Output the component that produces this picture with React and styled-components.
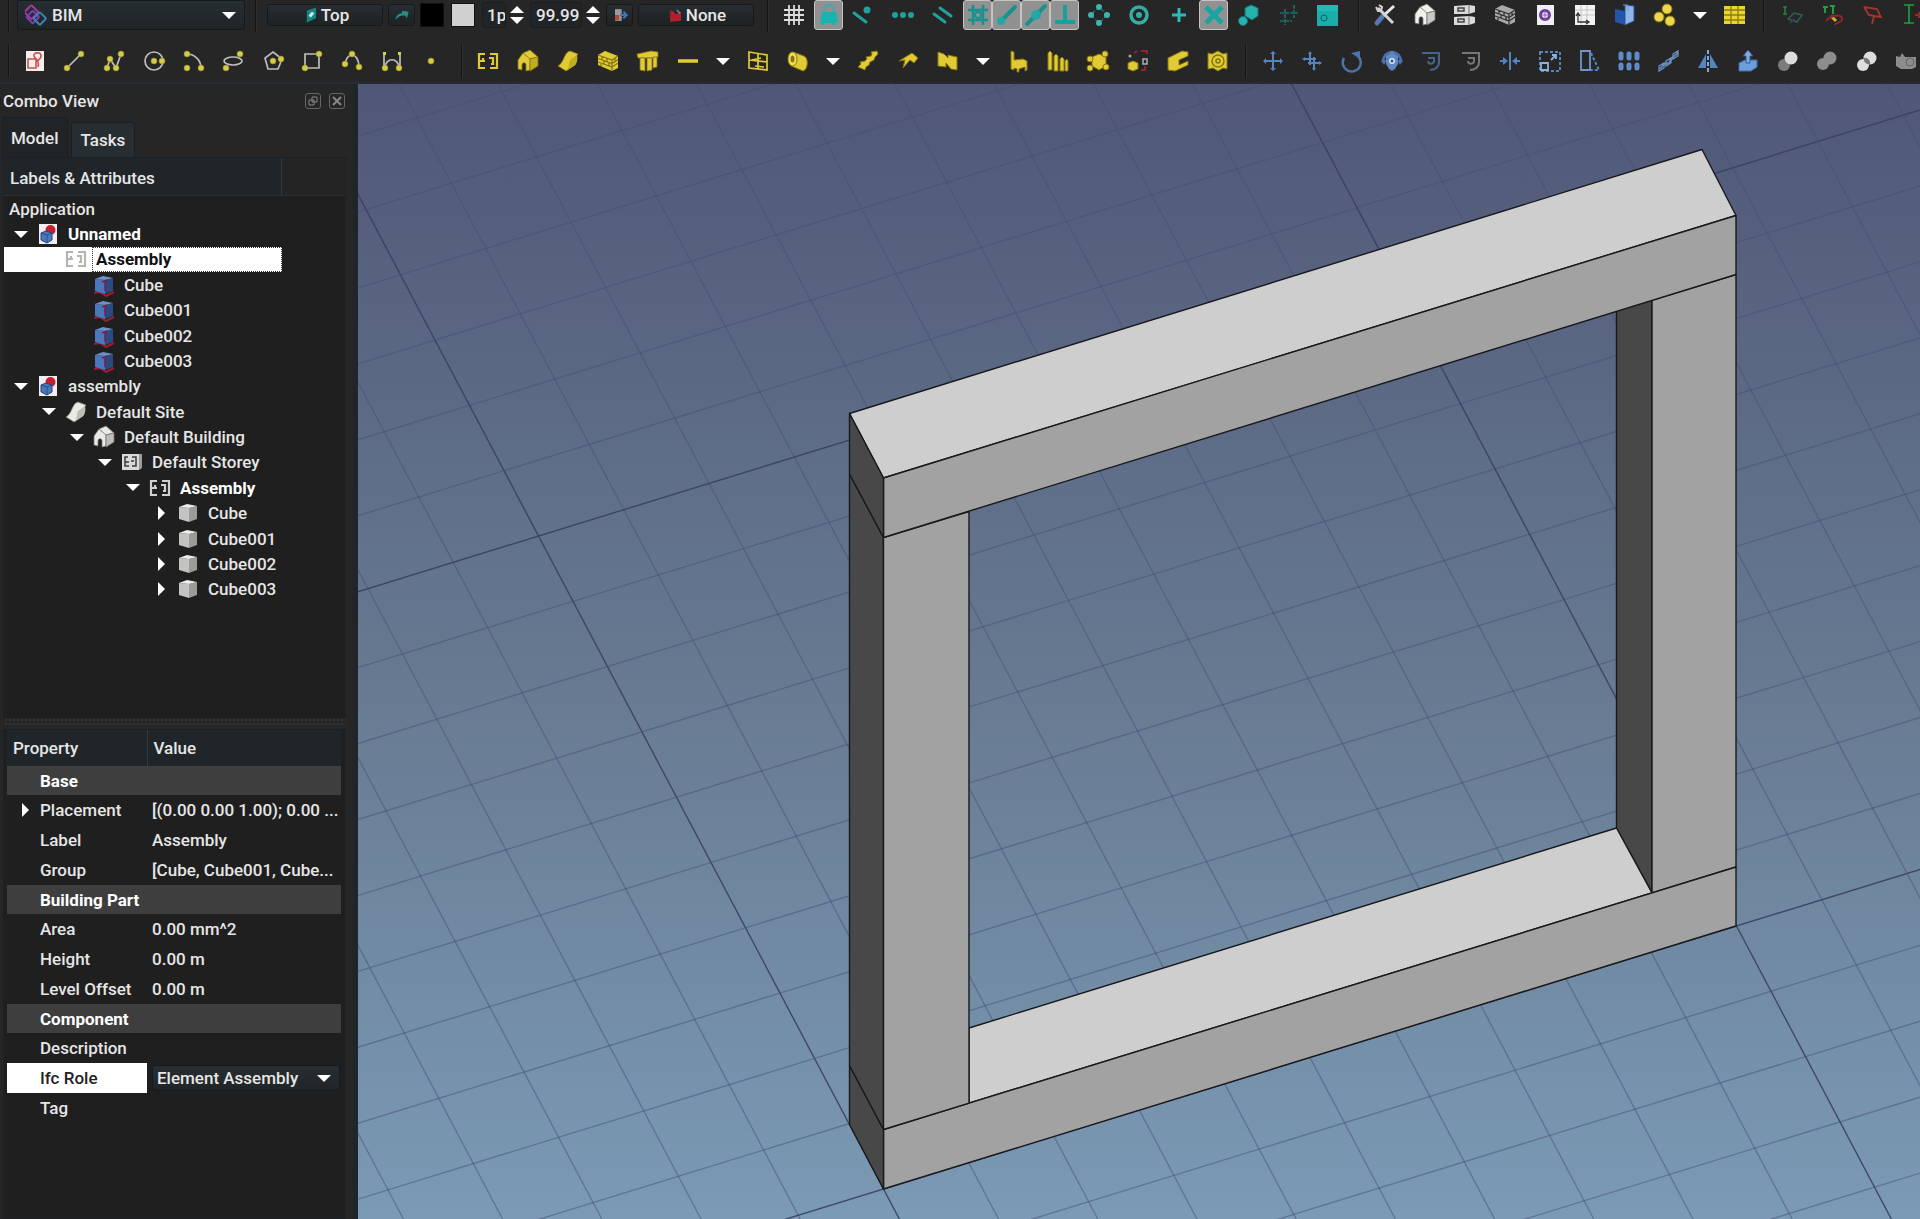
import React, { useState } from "react";
import styled, { createGlobalStyle, css } from "styled-components";

const GlobalStyle = createGlobalStyle`
  * {
    box-sizing: border-box;
  }

  body {
    margin: 0;
    background: #262626;
    color: #e6e6e6;
    font-family: Roboto, "Liberation Sans", sans-serif;
    font-size: 17px;
    font-weight: 500;
  }

  button, input, select {
    margin: 0;
    padding: 0;
    border: 0;
    color: inherit;
    background: none;
    font: inherit;
  }
`;

/* ---------- icons ---------- */

const Y = "#e0cb36";
const YD = "#84750f";
const T = "#22a09c";
const B = "#5585c0";

const Svg = styled.svg`
  display: block;
  flex: none;
  width: 24px;
  height: 24px;
`;

const Icon = ({ children }) => (
  <Svg viewBox="0 0 24 24" fill="none" aria-hidden="true">{children}</Svg>
);

// grey guide line with yellow control points
const Draft = ({ d, dots, children }) => (
  <Icon>
    {d && <path d={d} stroke="#bdbdbd" strokeWidth="1.700" />}
    {children}
    {dots.map(([x, y], i) => (
      <circle key={i} cx={x} cy={y} r="3" fill="#d4cb4c" stroke="#8f8720" strokeWidth=".6" />
    ))}
  </Icon>
);

const House = ({ light = Y, mid = "#c2ad22", dark = YD }) => (
  <Icon>
    <path d="M2 11 7 4l7 5v12l-4 1v-6c0-3-4-3-4 0v5l-4-1z" fill={light} stroke={dark} strokeWidth=".8" />
    <path d="M7 4 14 1l8 7-8 2z" fill={light} stroke={dark} strokeWidth=".8" />
    <path d="M14 10l8-2v9l-8 5z" fill={mid} stroke={dark} strokeWidth=".8" />
  </Icon>
);

const Terrain = ({ light = Y, mid = "#c2ad22", dark = YD }) => (
  <Icon>
    <path d="M2 17C8 14 8 3 14 2l8 3c-3 3-1 8-3 11L10 22z" fill={light} stroke={dark} strokeWidth=".8" />
    <path d="M14 11l7-5c1 4 0 8-2 10l-9 6c4-3 2-7 4-11z" fill={mid} />
  </Icon>
);

const Brackets = ({ color = Y }) => (
  <Icon>
    <path d="M9 5H3v14h6M3 12h6M7 9v3M14 5h7v14h-7M13 9h4v6h-2" stroke={color} strokeWidth="2.200" />
  </Icon>
);

const Bricks = ({ color = Y, dark = YD }) => (
  <Icon>
    <path d="M2 6 9 2l13 5v12l-6 3L2 16z" fill={color} />
    <path d="M2 6l14 5 6-4M16 11v11M2 9.500l14 5 6-4M2 13l14 5 6-4M6 7.500v3.500M11 9.500v3M8 12v3M13 13v4M5 15v2M19 9v4" stroke={dark} strokeWidth="1.300" />
  </Icon>
);

const Cube = ({ left, right, top, base }) => (
  <Icon>
    {base && <path d="M2 20l6-1 6 4 8-4" stroke="#a21c30" strokeWidth="2" />}
    <path d="M3 6l10 1v14L3 18z" fill={left} />
    <path d="M13 7l8-2v13l-8 3z" fill={right} />
    <path d="M3 6l8-3 10 2-8 2z" fill={top} />
    {base && <path d="M13 8v10M10 9l5-2" stroke="#7d1c48" strokeWidth="1.500" />}
  </Icon>
);

const DocIcon = () => (
  <Icon>
    <path d="M3 2h18v20H3z" fill="#f3eef0" />
    <circle cx="14.500" cy="8" r="5" fill="#c7202c" />
    <path d="M5 11l5-2 6 2v7l-5 3-6-3z" fill="#4a78bb" stroke="#26467e" />
    <path d="M5 11l6 2 5-2M11 13v8" stroke="#26467e" strokeWidth=".8" />
  </Icon>
);

const StoreyIcon = () => (
  <Icon>
    <path d="M2 4h17v16H2z" fill="#d9d9d5" />
    <path d="M19 4h3v14l-3 2z" fill="#9c9c98" />
    <path d="M8 7H5v9h4M5 12h4M12 7h4v9h-4M11 11h3" stroke="#3a3a3a" strokeWidth="1.500" />
  </Icon>
);

const BimLogo = () => (
  <Icon>
    <g strokeWidth="2" transform="rotate(-45 12 12)">
      <rect x="5" y="1" width="10" height="10" rx="1" stroke="#a1399f" />
      <rect x="3" y="6" width="9" height="9" rx="1" stroke="#7a3fb0" />
      <rect x="7" y="12" width="9" height="9" rx="1" stroke="#3b83b4" />
    </g>
  </Icon>
);

const icons = {
  // drafting
  sketch: (
    <Icon>
      <path d="M3 2h18v20H3z" fill="#f6eeee" />
      <path d="M5 10h8v9H5zM14 13c0-2 5-3 4-7s-8-2-7 1 6 4 4 11" stroke="#c9504f" strokeWidth="1.600" />
    </Icon>
  ),
  line: <Draft d="M5 19 19 5" dots={[[5, 19], [19, 5]]} />,
  wire: <Draft d="M5 19 8 10l6 9 5-14" dots={[[5, 19], [8, 10], [14, 19], [19, 5]]} />,
  circle: <Draft dots={[[12, 12], [20, 12]]}><circle cx="12" cy="12" r="9" stroke="#bdbdbd" strokeWidth="1.700" /></Draft>,
  arc: <Draft d="M6 5A14 14 0 0 1 20 19" dots={[[6, 5], [6, 19], [20, 19]]} />,
  ellipse: <Draft dots={[[19, 5], [5, 19]]}><ellipse cx="12" cy="12" rx="9" ry="4" stroke="#bdbdbd" strokeWidth="1.700" /></Draft>,
  polygon: <Draft d="M12 3l9 7-4 10H7L4 9z" dots={[[12, 12], [20, 10]]} />,
  rectangle: <Draft d="M5 5h14v14H5z" dots={[[19, 5], [5, 19]]} />,
  bspline: <Draft d="M5 16C6 3 18 2 19 17" dots={[[5, 15], [12, 5], [19, 18]]} />,
  bezier: <Draft d="M5 19C5 8 19 8 19 19M4 4v14M20 4v14" dots={[[5, 19], [19, 19]]}><path d="M3 3h3v3H3zM18 3h3v3h-3z" fill="#d9d04c" /></Draft>,
  point: <Draft dots={[[12, 12]]} />,

  // building
  assembly: <Brackets />,
  house: <House />,
  terrain: <Terrain />,
  wall: <Bricks />,
  structure: (
    <Icon>
      <path d="M1 5l14-3 7 1v5l-6 1H2z" fill={Y} stroke={YD} strokeWidth=".8" />
      <path d="M4 9h5v13l-5-1zM11 9h5v12l-5 1zM17 8h4v10l-4 1z" fill={Y} stroke={YD} strokeWidth=".8" />
    </Icon>
  ),
  bar: <Icon><path d="M2 12h20" stroke={Y} strokeWidth="3.500" /></Icon>,
  window: <Icon><path d="M3 3l18 3v15L3 19zM12 5v15M3 11l18 2M6 11l9-2M9 17l9 1" stroke={Y} strokeWidth="1.700" /></Icon>,
  pipe: (
    <Icon>
      <path d="M7 3l11 4c5 2 4 14-1 15L5 17z" fill={Y} stroke={YD} />
      <ellipse cx="6.500" cy="10" rx="4.500" ry="7" fill="#f2e25a" stroke={YD} />
      <ellipse cx="6.500" cy="10" rx="2" ry="3.500" fill={YD} />
    </Icon>
  ),
  stairs: <Icon><path d="M2 18l3-3-1-2 5-1 2-2-1-2 5-1 1-2-1-2 6-1 1 3-3 3-1 3-4 2-1 3-3 2-1 3z" fill={Y} stroke={YD} /></Icon>,
  roof: <Icon><path d="M3 12 16 4l6 5-4 5-4-3-7 8 2-8z" fill={Y} stroke={YD} /></Icon>,
  panel: <Icon><path d="M2 3l6 2 4 4V6l9 2v13l-6-1-5-6v4l-8-1z" fill={Y} stroke={YD} /></Icon>,
  chair: <Icon><path d="M5 2l3 1v8l9-1 4 2v9l-2 1v-4l-6 2v3h-2v-3l-3-1v2l-3-1z" fill={Y} stroke={YD} /></Icon>,
  fence: (
    <Icon>
      <path d="M2 4l2-2 2 2v17H2zM8 7l2-2 2 2v15H8zM14 10l2-2 2 2v12h-4zM19 12l2-2 1 2v10h-3z" fill={Y} stroke={YD} />
    </Icon>
  ),
  truss: (
    <Icon>
      <path d="M6 8l7-3 7 3v9l-7 4-7-4z" fill={Y} stroke={YD} />
      {[[4, 10], [19, 5], [4, 19], [20, 18]].map(([x, y]) => <circle key={x + "-" + y} cx={x} cy={y} r="3" fill={Y} stroke={YD} />)}
    </Icon>
  ),
  equipment: (
    <Icon>
      <path d="M2 14l5-2 5 2v6l-5 2-5-2z" fill={Y} stroke={YD} />
      <path d="M8 4l3-2M15 2h6v3M19 17v4h-4" stroke="#8f2433" strokeWidth="2" />
      <path d="M17 10h4v5h-4z" stroke="#a9b0be" strokeWidth="1.500" />
      <circle cx="4" cy="7" r="1.500" fill="#aaa" />
    </Icon>
  ),
  profile: <Icon><path d="M2 9 16 2l6 1v4l-9 4v5l9-4v4L9 22l-7-1z" fill={Y} stroke={YD} /></Icon>,
  reference: (
    <Icon>
      <path d="M2 4l4 1 6-3 5 3 4-1v16l-4-1-5 3-5-3-5 1z" fill={Y} stroke={YD} />
      <circle cx="12" cy="12" r="6" stroke={YD} strokeWidth="1.500" />
      <circle cx="12" cy="12" r="2" stroke={YD} strokeWidth="1.500" />
    </Icon>
  ),

  // modification
  move: <Icon><path d="M12 4v16M4 12h16" stroke={B} strokeWidth="2" /><path d="M9 5l3-3 3 3zM9 19l3 3 3-3zM5 9l-3 3 3 3zM19 9l3 3-3 3z" fill={B} /></Icon>,
  copy: <Icon><path d="M10 4v12M4 10h12M14 8v12M8 14h13" stroke={B} strokeWidth="2" /><path d="M8 5l2-3 2 3zM5 8l-3 2 3 2zM12 19l2 3 2-3zM19 12l3 2-3 2z" fill={B} /></Icon>,
  rotate: <Icon><path d="M4 9a9 9 0 1 0 14-2" stroke="#4f73a8" strokeWidth="2.500" /><path d="M11 4l9-2v8z" fill="#4f73a8" /></Icon>,
  gear: (
    <Icon>
      <path d="M3 14C3 6 8 3 12 3s9 3 9 11" stroke="#4a70ab" strokeWidth="2.500" />
      <path d="M1 11l3 5 3-5zM17 11l3 5 3-5z" fill="#4a70ab" />
      <path d="M12 2l3 3 3 2v8l-3 5-3 2-3-2-3-5V7l3-2z" fill="#5f87c2" />
      <circle cx="12" cy="12" r="3" fill="#dfe8f5" /><circle cx="12" cy="12" r="1.500" fill="#33527f" />
    </Icon>
  ),
  offset: <Icon><path d="M3 4h17v9c0 5-4 8-9 8M9 9h6v3c0 3-6 4-6 0" stroke="#47638f" strokeWidth="2" /></Icon>,
  offset2d: <Icon><path d="M3 4h17v9c0 5-4 8-9 8M9 9h6v3c0 3-6 4-6 0" stroke="#777" strokeWidth="2" /></Icon>,
  trimex: <Icon><path d="M12 3v18" stroke={B} strokeWidth="2" /><path d="M2 12h4M18 12h4" stroke={B} strokeWidth="2" /><path d="M5 8l5 4-5 4zM19 8l-5 4 5 4z" fill={B} /></Icon>,
  scale: <Icon><path d="M2 3h20v19H2z" stroke={B} strokeWidth="2" strokeDasharray="3 2" /><path d="M3 14h7v7H3zM13 11l5-5M14 6h4v4" stroke="#8db1e0" strokeWidth="1.800" /></Icon>,
  stretch: <Icon><path d="M3 2h9v19H3z" stroke="#6b96ce" strokeWidth="1.800" /><path d="M13 4l8 17h-8" stroke={B} strokeWidth="2" strokeDasharray="3 2" /></Icon>,
  array: (
    <Icon>
      {[4, 12, 20].map((x) => <path key={x} d={`M${x} 5v4M${x} 16v3`} stroke="#5f8bc8" strokeWidth="5" strokeLinecap="round" />)}
    </Icon>
  ),
  pathArray: <Icon><path d="M3 20l4-5 5-1 3-5 6-5" stroke={B} strokeWidth="2" /><path d="M2 17l5-3v5l-5 3zM9 12l5-3v5l-5 3zM16 5l5-3v5l-5 3z" stroke="#6e90bc" strokeWidth="1.300" /></Icon>,
  mirror: <Icon><path d="M12 1v22" stroke="#7ea9df" strokeWidth="2" strokeDasharray="4 2" /><path d="M10 5v14H2zM14 5v14h8z" fill={B} /></Icon>,
  upgrade: <Icon><path d="M3 14l6-3h12v7l-6 4H3z" fill="#6c9ddd" stroke="#416da9" /><path d="M10 14V7H7l5-6 5 6h-3v7z" fill="#7eaae6" stroke="#35598c" /></Icon>,
  cut: <Icon><circle cx="8" cy="16" r="6" fill="#7c7c7c" /><circle cx="15" cy="9" r="6.500" fill="#dcdcdc" /></Icon>,
  fuse: <Icon><circle cx="8" cy="15" r="6" fill="#8d8d8d" /><circle cx="15" cy="9" r="6.500" fill="#8d8d8d" /></Icon>,
  common: <Icon><circle cx="8" cy="16" r="6" fill="#dedede" /><circle cx="15" cy="9" r="6.500" fill="#dedede" /><path d="M9 9c3-1 7 3 6 6-4 1-7-3-6-6z" fill="#777" /></Icon>,
  compound: <Icon><path d="M2 7l4 1 2-4 3 4h11v10l-4 2H7l-5-3z" fill="#8d8d8d" /><circle cx="16" cy="13" r="4" stroke="#666" /></Icon>,

  // snapping
  grid: <Icon><path d="M2 7h20M2 12h20M2 17h20M7 2v20M12 2v20M17 2v20" stroke="#dcdcdc" strokeWidth="1.800" /></Icon>,
  lock: <Icon><path d="M7 9V6c0-5 10-5 10 0v3" stroke="#4aa9a7" strokeWidth="2.500" /><path d="M5 9h14l2 11H3z" fill="#19b3b0" /><path d="M5 20h3v2H5zM15 20h3v2h-3z" fill="#19b3b0" /></Icon>,
  endpoint: <Icon><path d="M3 10l12 9" stroke={T} strokeWidth="3" strokeLinecap="round" /><circle cx="16" cy="7" r="3.500" fill={T} /></Icon>,
  dots: <Icon>{[4, 12, 20].map((x) => <circle key={x} cx={x} cy="12" r="3" fill={T} />)}</Icon>,
  parallel: <Icon><path d="M3 11l11 8M9 5l11 8" stroke={T} strokeWidth="3" strokeLinecap="round" /></Icon>,
  snapGrid: <Icon><path d="M7 2v20M17 2v20M2 7h20M2 17h20" stroke="#16938f" strokeWidth="2.500" /><circle cx="12" cy="12" r="3" stroke="#16938f" strokeWidth="2" /></Icon>,
  end: <Icon><path d="M7 17 20 4" stroke="#16938f" strokeWidth="4" strokeLinecap="round" /><circle cx="6" cy="18" r="4" fill="#21a8a4" /></Icon>,
  mid: <Icon><path d="M3 21 21 3" stroke="#16938f" strokeWidth="4" strokeLinecap="round" /><circle cx="12" cy="12" r="5" fill="#21a8a4" /></Icon>,
  perp: <Icon><path d="M12 2v17M2 19h20" stroke="#17a09c" strokeWidth="4" /></Icon>,
  angle: (
    <Icon>
      <circle cx="12" cy="12" r="6" stroke={T} strokeDasharray="3 2" />
      {[[12, 4], [4, 12], [20, 12], [12, 20]].map(([x, y]) => <circle key={x + "-" + y} cx={x} cy={y} r="3" fill="#3cb4b0" />)}
    </Icon>
  ),
  center: <Icon><circle cx="12" cy="12" r="8" stroke="#35aba7" strokeWidth="3.500" /><circle cx="12" cy="12" r="3" fill="#35aba7" /></Icon>,
  plus: <Icon><path d="M12 5v14M5 12h14" stroke="#2bbcb8" strokeWidth="3" /></Icon>,
  intersect: <Icon><path d="M4 4l16 16M20 4 4 20" stroke="#19a4a1" strokeWidth="5" /></Icon>,
  special: <Icon><path d="M9 5l6-3 7 3v8l-6 4-7-4z" fill="#25b2ae" stroke="#15716f" /><circle cx="7" cy="18" r="4.500" fill="#25b2ae" stroke="#15716f" /></Icon>,
  dims: <Icon><path d="M4 10h18M4 18h12M9 6v16M18 2v13" stroke="#1a6f6c" strokeWidth="1.700" strokeDasharray="4 1" /></Icon>,
  plane: <Icon><path d="M1 2h21v21H1z" fill="#19aeaa" /><path d="M1 2h21v6H1z" fill="#22bab6" /><circle cx="8" cy="15" r="3" stroke="#0c6562" /></Icon>,

  // tools
  wrench: (
    <Icon>
      <path d="M21 3 8 15" stroke="#e9e9e9" strokeWidth="3" /><path d="M9 14l-5 6" stroke="#5776b2" strokeWidth="5" strokeLinecap="round" />
      <path d="M5 5l15 15" stroke="#d4d4d4" strokeWidth="3" /><path d="M3 4l2 4h3l1-4-3-2" stroke="#d4d4d4" strokeWidth="2" />
    </Icon>
  ),
  building: <House light="#f1f1ee" mid="#c9c9c5" dark="#777" />,
  levels: (
    <Icon>
      <path d="M1 3l15-1 6 1v6l-6 2H1zM1 14l15-1 6 1v6l-6 2H1z" fill="#dadad7" />
      <path d="M16 2v9M16 13v9" stroke="#777" /><path d="M5 5h6v3H5zM5 16h6v3H5z" stroke="#444" strokeWidth="1.500" />
    </Icon>
  ),
  bricks: <Bricks color="#a9a9a9" dark="#333" />,
  ifc: (
    <Icon>
      <path d="M4 2h17v20H4z" fill="#f0edf4" />
      <circle cx="12" cy="12" r="4.500" stroke="#6b3a9b" strokeWidth="3" /><path d="M12 7v10M7 12h10" stroke="#8b62b4" />
    </Icon>
  ),
  drawing: <Icon><path d="M2 2h20v20H2z" fill="#f2f2f2" /><path d="M2 7h20M2 12h20M8 2v20M14 2v20" stroke="#bbb" strokeWidth=".8" /><path d="M5 11v8h10M3 13l2-3 2 3M13 17l3 2-3 2" stroke="#333" strokeWidth="1.300" /></Icon>,
  views: <Icon><path d="M2 6l10 2v14L2 19z" fill="#2454ad" /><path d="M12 2l9 1v15l-9 4z" fill="#8fb6e8" stroke="#2b5397" /><path d="M10 2h5v6" stroke="#6b99d8" /></Icon>,
  balls: <Icon>{[[14, 6], [6, 14], [17, 18]].map(([x, y]) => <circle key={x} cx={x} cy={y} r="5" fill="#ecd84a" stroke="#877612" />)}</Icon>,
  table: <Icon><path d="M1 3h21v18H1z" fill="#ecd52e" /><path d="M1 7h21M1 12h21M1 17h21M8 3v18M15 3v18" stroke="#8d7d12" strokeWidth="1.300" /></Icon>,
  axisPlane: <Icon><path d="M2 4h4M4 4v7M2 11h4" stroke="#1d8a3b" strokeWidth="1.500" /><path d="M7 16l6-6 8 2-5 7z" stroke="#305f4a" strokeWidth="1.500" /><path d="M9 20l5-4" stroke="#2c3f7d" strokeWidth="1.500" /></Icon>,
  axisSystem: <Icon><path d="M2 4h5M4 4v6M9 3h5M12 3v8" stroke="#1fa03f" strokeWidth="2" /><path d="M10 13l5 5" stroke="#c9b41e" strokeWidth="3" /><path d="M5 18c4-5 14-8 16-3s-7 4-7 7" stroke="#8e2533" strokeWidth="2" /></Icon>,
  section: <Icon><path d="M3 4l13 2 4 8-7-1-2 8M3 4l5 8 5 1" stroke="#a8352b" strokeWidth="1.800" /></Icon>,
  ibeam: <Icon><path d="M3 2h10M8 2v18M3 20h10" stroke="#17a13a" strokeWidth="1.700" /><path d="M14 12h8M18 9v6" stroke="#a0252b" strokeWidth="2" /></Icon>,

  // small ones inside the controls
  planeTop: <Icon><path d="M7 7l11-4v13L7 21z" fill="#1a8583" /><path d="M9 13l4-5 3 2-4 5z" fill="#c8f2f0" /></Icon>,
  auto: <Icon><path d="M4 18c1-5 4-8 8-8V7l8 1-2 8-2-3c-4-1-8 0-12 5z" fill="#2a8c89" /></Icon>,
  apply: <Icon><path d="M6 5h8v14H6z" fill="#9b9b9b" /><path d="M6 12h5v6H6z" fill="#b7483d" /><path d="M12 12h7M16 8l4 4-4 4" stroke="#4472bb" strokeWidth="2.500" /></Icon>,
  group: <Icon><path d="M5 6l4 2 3 3 6-3v11l-13 1z" fill="#b3202d" /><path d="M13 6l4 4" stroke="#6d7f9c" strokeWidth="2" /></Icon>,
};

/* ---------- toolbar ---------- */

const Page = styled.div`
  display: flex;
  flex-direction: column;
  min-height: 100vh;
`;

const Toolbars = styled.header`
  overflow: hidden;
  border-bottom: 2px solid #262b3a;
  background: #262626;
`;

const Bar = styled.div`
  display: flex;
  align-items: center;
  height: ${(p) => p.$height}px;
  margin-top: ${(p) => p.$top || 0}px;
  padding-left: 8px;

  > * {
    flex: none;
  }
`;

const Separator = styled.span`
  width: 2px;
  height: 34px;
  margin: 0 ${(p) => p.$after ?? 8}px 0 ${(p) => p.$before ?? 8}px;
  border-left: 1px solid #151515;
  border-right: 1px solid #303030;
`;

const Group = styled.div`
  display: flex;
  align-items: center;
  width: ${(p) => (p.$width ? p.$width + "px" : "auto")};
`;

const ToolButton = styled.button`
  display: flex;
  align-items: center;
  justify-content: center;
  flex: 0 1 auto;
  width: 40px;
  min-width: 0;
  height: 30px;
  cursor: pointer;

  ${(p) => p.$pressed && css`
    width: 29px;
    border: 1px solid #c4c4c4;
    border-radius: 3px;
    background: #919191;
  `}
`;

const DropButton = styled.button`
  display: flex;
  align-items: center;
  justify-content: center;
  flex: none;
  width: 30px;
  height: 30px;
`;

const Triangle = styled.span`
  display: block;
  width: 0;
  height: 0;
  border: 6px solid transparent;

  ${(p) => p.$dir === "right" && css`
    border-width: 7px 0 7px 7px;
    border-left-color: #fff;
  `}
  ${(p) => p.$dir === "down" && css`
    border-width: 7px 7px 0 7px;
    border-top-color: #fff;
  `}
  ${(p) => p.$dir === "up" && css`
    border-width: 0 7px 7px 7px;
    border-bottom-color: #fff;
  `}
`;

const SelectBox = styled.div`
  position: relative;
  display: flex;
  align-items: center;
  width: ${(p) => p.$width}px;
  height: ${(p) => p.$height}px;
  border: 1px solid #171a1c;
  border-radius: 3px;
  background: linear-gradient(#272e31, #1f2427);
`;

const SelectIcon = styled.span`
  position: absolute;
  left: ${(p) => p.$left || "auto"};
  right: ${(p) => p.$right || "auto"};
  pointer-events: none;
`;

const Select = styled.select`
  appearance: none;
  width: 100%;
  height: 100%;
  padding-left: ${(p) => p.$pad}px;
  outline: none;
`;

const FlatButton = styled.button`
  display: flex;
  align-items: center;
  justify-content: center;
  width: ${(p) => p.$width}px;
  height: 22px;
  margin-right: 5px;
  border: 1px solid #171a1c;
  border-radius: 3px;
  background: linear-gradient(#272d30, #1d2225);

  svg {
    width: 20px;
  }
`;

const Swatch = styled.button`
  width: 24px;
  height: 24px;
  margin-right: 7px;
  border: 1px solid #111;
  background: ${(p) => p.$color};
`;

const NumberInput = styled.input`
  width: ${(p) => p.$width}px;
  height: 26px;
  padding-left: ${(p) => p.$pad}px;
  border: 1px solid #1b1e20;
  border-radius: 3px;
  background: #202426;
`;

const Stepper = styled.span`
  display: flex;
  flex-direction: column;
  gap: 4px;
  margin: 0 ${(p) => p.$after}px 0 4px;

  button {
    display: flex;
  }
`;

const Spin = ({ label, after }) => (
  <Stepper $after={after}>
    <button aria-label={`Increase ${label}`}><Triangle $dir="up" /></button>
    <button aria-label={`Decrease ${label}`}><Triangle $dir="down" /></button>
  </Stepper>
);

const Tools = ({ names, pressed = [], width }) => (
  <Group $width={width}>
    {names.map((name, i) =>
      name === "|" ? (
        <DropButton key={i} aria-label="More"><Triangle $dir="down" /></DropButton>
      ) : (
        <ToolButton key={i} aria-label={name} $pressed={pressed.includes(name)}>{icons[name]}</ToolButton>
      )
    )}
  </Group>
);

const snapTools = ["grid", "lock", "endpoint", "dots", "parallel", "snapGrid", "end", "mid", "perp", "angle", "center", "plus", "intersect", "special", "dims", "plane"];
const snapPressed = ["lock", "snapGrid", "end", "mid", "perp", "intersect"];
const manageTools = ["wrench", "building", "levels", "bricks", "ifc", "drawing", "views", "balls", "|", "table"];
const axisTools = ["axisPlane", "axisSystem", "section", "ibeam"];
const draftTools = ["sketch", "line", "wire", "circle", "arc", "ellipse", "polygon", "rectangle", "bspline", "bezier", "point"];
const buildTools = ["assembly", "house", "terrain", "wall", "structure", "bar", "|", "window", "pipe", "|", "stairs", "roof", "panel", "|", "chair", "fence", "truss", "equipment", "profile", "reference"];
const modifyTools = ["move", "copy", "rotate", "gear", "offset", "offset2d", "trimex", "scale", "stretch", "array", "pathArray", "mirror", "upgrade", "cut", "fuse", "common", "compound"];

const TopToolbars = () => (
  <Toolbars>
    <Bar $height={30}>
      <Separator $before={0} $after={7} />
      <SelectBox $width={228} $height={30}>
        <SelectIcon $left="7px"><BimLogo /></SelectIcon>
        <Select $pad={34} aria-label="Workbench">
          <option>BIM</option>
        </Select>
        <SelectIcon $right="8px"><Triangle $dir="down" /></SelectIcon>
      </SelectBox>
      <Separator $before={10} $after={10} />
      <FlatButton $width={116}>{icons.planeTop}Top</FlatButton>
      <FlatButton $width={27} aria-label="Construction mode">{icons.auto}</FlatButton>
      <Swatch $color="#000" aria-label="Line color" />
      <Swatch $color="#d0d0ce" aria-label="Face color" />
      <NumberInput $width={24} $pad={4} defaultValue="1p" aria-label="Line width" />
      <Spin label="line width" after={6} />
      <NumberInput $width={52} $pad={5} defaultValue="99.99" aria-label="Text size" />
      <Spin label="text size" after={6} />
      <FlatButton $width={27} aria-label="Apply style">{icons.apply}</FlatButton>
      <FlatButton $width={116}>{icons.group}None</FlatButton>
      <Separator $before={8} $after={5} />
      <Tools names={snapTools} pressed={snapPressed} />
      <Separator $before={10} $after={5} />
      <Tools names={manageTools} />
      <Separator />
      <Tools names={axisTools} />
    </Bar>
    <Bar $height={42} $top={10}>
      <Separator $before={0} $after={5} />
      <Tools names={draftTools} width={436} />
      <Separator $before={10} $after={5} />
      <Tools names={buildTools} />
      <Separator $before={7} $after={6} />
      <Tools names={modifyTools} width={673} />
    </Bar>
  </Toolbars>
);

/* ---------- combo view ---------- */

const Main = styled.div`
  display: flex;
  flex: 1;
`;

const Side = styled.aside`
  display: flex;
  flex-direction: column;
  flex: none;
  width: 358px;
  padding-right: 7px;
  border-right: 5px solid #1f2529;
  background: #262626;
`;

const Title = styled.div`
  display: flex;
  align-items: center;
  height: 33px;
  padding: 0 1px 0 3px;
  gap: 8px;

  h2 {
    flex: 1;
    margin: 0;
    font-size: 17px;
    font-weight: 500;
  }
`;

const TitleButton = styled.button`
  display: flex;
  align-items: center;
  justify-content: center;
  width: 16px;
  height: 16px;
  border: 1px solid #666;
  border-radius: 3px;
  color: #888;

  svg {
    width: 12px;
    height: 12px;
  }
`;

const TabList = styled.div`
  display: flex;
  align-items: flex-end;
  gap: 3px;
  padding-left: 2px;
`;

const Tab = styled.button`
  height: ${(p) => (p.$active ? 40 : 35)}px;
  padding: 0 ${(p) => (p.$active ? 8 : 9)}px;
  border: 1px solid #1b1f21;
  border-bottom: 0;
  border-radius: 3px 3px 0 0;
  background: ${(p) => (p.$active ? "#202426" : "#272e31")};
`;

const TreePanel = styled.section`
  height: 561px;
  margin-left: 3px;
  border: 1px solid #1b2124;
  background: #1f1f1f;
`;

const TreeHeader = styled.div`
  display: flex;
  background: #242424;
  border-bottom: 1px solid #2b3032;

  span {
    flex: 0 0 278px;
    padding: 3px 0 0 6px;
    border-right: 1px solid #33393c;
    background: #20252a;
    line-height: 34px;
  }
`;

const TreeList = styled.ul`
  display: grid;
  grid-auto-rows: 1fr;
  width: 278px;
  height: 406px;
  margin: 0;
  padding: 0;
  list-style: none;
`;

const TreeRow = styled.li`
  display: flex;
  align-items: center;
  padding-left: ${(p) => 4 + p.$depth * 28}px;
  background: ${(p) => (p.$selected ? "#fff" : "none")};
  color: ${(p) => (p.$selected ? "#111" : p.$bold ? "#fff" : "#e6e6e6")};
  font-weight: ${(p) => (p.$bold ? 700 : 500)};
`;

const RootRow = styled.li`
  display: flex;
  align-items: center;
  padding-left: 5px;
`;

const Twisty = styled.button`
  display: flex;
  align-items: center;
  justify-content: center;
  flex: none;
  width: 26px;
  height: 20px;
  margin-right: 2px;
`;

const NodeLabel = styled.span`
  flex: 1;
  align-self: stretch;
  display: flex;
  align-items: center;
  margin-left: 4px;
  padding-left: 3px;
  border: 1px dotted ${(p) => (p.$selected ? "#333" : "transparent")};
`;

const blueCube = <Cube left="#4a78bd" right="#2c4a80" top="#6d92cb" base />;
const greyCube = <Cube left="#c3c4bf" right="#9b9c97" top="#ededea" />;
const paper = { light: "#e9e9e5", mid: "#bdbdb8", dark: "#777" };

const nodes = [
  { depth: 0, name: "Unnamed", icon: <DocIcon />, open: true, bold: true },
  { depth: 1, name: "Assembly", icon: <Brackets color="#b5b5b0" />, selected: true, bold: true },
  { depth: 2, name: "Cube", icon: blueCube },
  { depth: 2, name: "Cube001", icon: blueCube },
  { depth: 2, name: "Cube002", icon: blueCube },
  { depth: 2, name: "Cube003", icon: blueCube },
  { depth: 0, name: "assembly", icon: <DocIcon />, open: true },
  { depth: 1, name: "Default Site", icon: <Terrain {...paper} />, open: true },
  { depth: 2, name: "Default Building", icon: <House {...paper} />, open: true },
  { depth: 3, name: "Default Storey", icon: <StoreyIcon />, open: true },
  { depth: 4, name: "Assembly", icon: <Brackets color="#d0d0cc" />, open: true, bold: true },
  { depth: 5, name: "Cube", icon: greyCube, open: false },
  { depth: 5, name: "Cube001", icon: greyCube, open: false },
  { depth: 5, name: "Cube002", icon: greyCube, open: false },
  { depth: 5, name: "Cube003", icon: greyCube, open: false },
];

const Tree = () => (
  <TreePanel>
    <TreeHeader><span>Labels &amp; Attributes</span></TreeHeader>
    <TreeList role="tree" aria-label="Labels & Attributes">
      <RootRow role="treeitem">Application</RootRow>
      {nodes.map((node, i) => (
        <TreeRow key={i} role="treeitem" aria-selected={!!node.selected} $depth={node.depth} $selected={node.selected} $bold={node.bold}>
          <Twisty aria-label={node.open ? "Collapse" : "Expand"} disabled={node.open === undefined}>
            {node.open !== undefined && <Triangle $dir={node.open ? "down" : "right"} />}
          </Twisty>
          {node.icon}
          <NodeLabel $selected={node.selected}>{node.name}</NodeLabel>
        </TreeRow>
      ))}
    </TreeList>
  </TreePanel>
);

const Splitter = styled.div`
  height: 9px;
  margin: 0 0 2px 4px;
  background: radial-gradient(circle, #333 1px, transparent 1px) 0 0 / 4px 4px;
`;

const PropertyPanel = styled.section`
  flex: 1;
  margin-left: 3px;
  padding: 0 4px 0 3px;
  border: 1px solid #1b2124;
  background: #1f1f1f;
`;

const PropertyTable = styled.table`
  width: 100%;
  table-layout: fixed;
  border-collapse: collapse;
  text-align: left;
  white-space: nowrap;

  th, td {
    padding: 0;
    font-weight: 500;
  }

  thead th {
    height: 36px;
    padding-left: 6px;
    background: #20252a;
  }

  thead th:first-child {
    width: 140px;
    border-right: 1px solid #33393c;
  }
`;

const Category = styled.tr`
  height: 29px;
  background: #3e3e3e;
  color: #fff;

  && th {
    padding-left: 33px;
    font-weight: 700;
  }
`;

const PropertyRow = styled.tr`
  height: 30px;

  && th {
    background: ${(p) => (p.$selected ? "#fff" : "none")};
    color: ${(p) => (p.$selected ? "#222" : "inherit")};
  }

  td {
    padding-left: 5px;
  }
`;

const PropertyName = styled.div`
  display: flex;
  align-items: center;
  padding-left: ${(p) => (p.$expandable ? 5 : 33)}px;
`;

const properties = [
  { category: "Base" },
  { name: "Placement", value: "[(0.00 0.00 1.00); 0.00 ...", expandable: true },
  { name: "Label", value: "Assembly" },
  { name: "Group", value: "[Cube, Cube001, Cube..." },
  { category: "Building Part" },
  { name: "Area", value: "0.00 mm^2" },
  { name: "Height", value: "0.00 m" },
  { name: "Level Offset", value: "0.00 m" },
  { category: "Component" },
  { name: "Description", value: "" },
  { name: "Ifc Role", options: ["Element Assembly"], selected: true },
  { name: "Tag", value: "" },
];

const Properties = () => (
  <PropertyPanel>
    <PropertyTable>
      <thead>
        <tr><th>Property</th><th>Value</th></tr>
      </thead>
      <tbody>
        {properties.map((p) =>
          p.category ? (
            <Category key={p.category}><th colSpan="2">{p.category}</th></Category>
          ) : (
            <PropertyRow key={p.name} $selected={p.selected}>
              <th scope="row">
                <PropertyName $expandable={p.expandable}>
                  {p.expandable && <Twisty aria-label="Expand"><Triangle $dir="right" /></Twisty>}
                  {p.name}
                </PropertyName>
              </th>
              <td>
                {p.options ? (
                  <SelectBox $width={188} $height={26}>
                    <Select $pad={4} aria-label={p.name}>
                      {p.options.map((o) => <option key={o}>{o}</option>)}
                    </Select>
                    <SelectIcon $right="8px"><Triangle $dir="down" /></SelectIcon>
                  </SelectBox>
                ) : p.value}
              </td>
            </PropertyRow>
          )
        )}
      </tbody>
    </PropertyTable>
  </PropertyPanel>
);

const ComboView = () => {
  const [tab, setTab] = useState("Model");

  return (
    <Side>
      <Title>
        <h2>Combo View</h2>
        <TitleButton aria-label="Float">
          <svg viewBox="0 0 12 12" fill="none" stroke="currentColor"><path d="M5 2h5v5H5zM2 5h5v5H2z" /></svg>
        </TitleButton>
        <TitleButton aria-label="Close">
          <svg viewBox="0 0 12 12" stroke="currentColor" strokeWidth="2"><path d="M2 2l8 8M10 2l-8 8" /></svg>
        </TitleButton>
      </Title>
      <TabList role="tablist">
        {["Model", "Tasks"].map((name) => (
          <Tab key={name} role="tab" aria-selected={tab === name} $active={tab === name} onClick={() => setTab(name)}>
            {name}
          </Tab>
        ))}
      </TabList>
      <Tree />
      <Splitter />
      <Properties />
    </Side>
  );
};

/* ---------- 3D view ---------- */

const View = styled.main`
  flex: 1;
  min-width: 0;
  display: grid;
  background: linear-gradient(#505777, #64768f 46%, #66788f 50%, #7b9ab5);

  svg {
    width: 100%;
    height: 100%;
    min-height: 0;
  }
`;

// grid axes as they project on the screen, one step per cell
const ORIGIN = [883.5, 1189];
const U = [85.3, -26.3];
const V = [-34.5, -65.3];

const at = (u, v) => [ORIGIN[0] + u * U[0] + v * V[0], ORIGIN[1] + u * U[1] + v * V[1]];

const GridLine = ({ from, to, major }) => (
  <line
    x1={from[0]} y1={from[1]} x2={to[0]} y2={to[1]}
    stroke={major ? "#3b3f63" : "#454e7a"}
    strokeOpacity={major ? 0.9 : 0.5}
    strokeWidth={major ? 1.4 : 1.3}
  />
);

const steps = Array.from({ length: 51 }, (_, i) => i - 20);

const Face = ({ points, fill }) => (
  <polygon points={points} fill={fill} stroke="#17191c" strokeWidth="1.400" strokeLinejoin="round" />
);

const LIGHT = "#cecece";
const FRONT = "#a2a2a2";
const DARK = "#484848";

const Viewport = () => (
  <View>
    <svg viewBox="358 84 1562 1135" preserveAspectRatio="xMinYMin slice" role="img" aria-label="3D view">
      {steps.map((n) => (
        <React.Fragment key={n}>
          <GridLine from={at(n, -20)} to={at(n, 40)} major={n % 10 === 0} />
          <GridLine from={at(-30, n)} to={at(40, n)} major={n % 10 === 0} />
        </React.Fragment>
      ))}
      {/* right post */}
      <Face points="1616.5,300 1652,300 1652,892.8 1616.5,828" fill={DARK} />
      <Face points="1652,300 1736,274.5 1736,867 1652,892.8" fill={FRONT} />
      {/* bottom beam */}
      <Face points="969,1028 1616.5,828 1652,892.8 969,1103.2" fill={LIGHT} />
      <Face points="883.5,1129.5 1736,867 1736,926 883.5,1189" fill={FRONT} />
      <Face points="849.5,1065.5 883.5,1129.5 883.5,1189 849.5,1124.5" fill={DARK} />
      {/* left post */}
      <Face points="849.5,474 883.5,537.5 883.5,1129.5 849.5,1065.5" fill={DARK} />
      <Face points="883.5,537.5 969,511.5 969,1103.2 883.5,1129.5" fill={FRONT} />
      {/* top beam */}
      <Face points="849.5,413.5 1702,149.5 1736,215.5 883.5,478" fill={LIGHT} />
      <Face points="883.5,478 1736,215.5 1736,274.5 883.5,537.5" fill={FRONT} />
      <Face points="849.5,413.5 883.5,478 883.5,537.5 849.5,474" fill={DARK} />
    </svg>
  </View>
);

const App = () => (
  <Page>
    <GlobalStyle />
    <TopToolbars />
    <Main>
      <ComboView />
      <Viewport />
    </Main>
  </Page>
);

export default App;
